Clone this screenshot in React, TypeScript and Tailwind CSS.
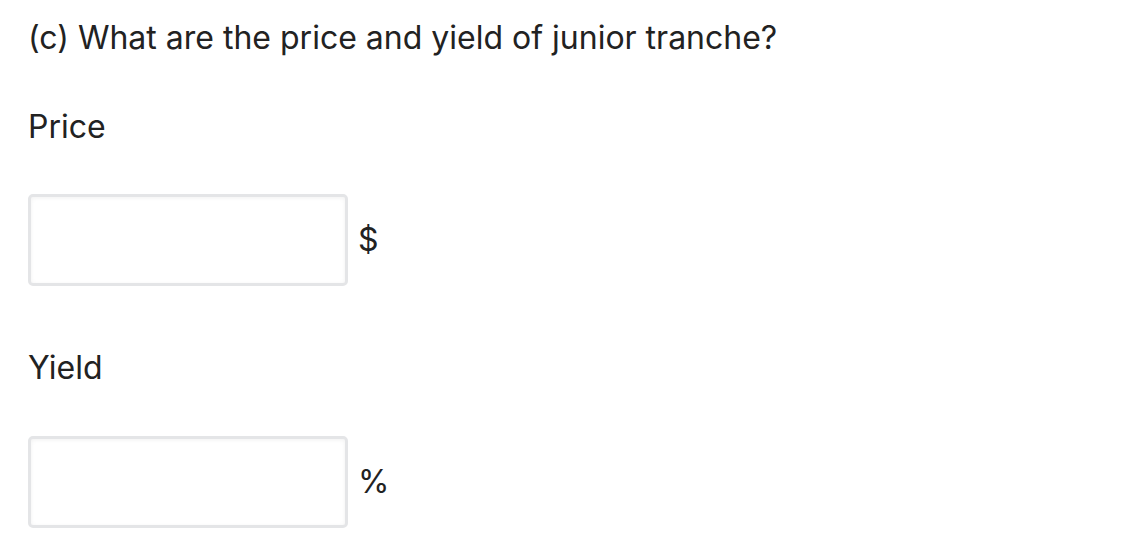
export default function App() {
  return (
    <div className="w-[1140px] h-[552px] bg-white text-[#222] pl-[28px] pt-[14px]" style={{ fontFamily: 'Inter, "Noto Sans", sans-serif' }}>
      <div className="text-[32px] leading-[48px]">(c) What are the price and yield of junior tranche?</div>
      <div className="mt-[41px] text-[32px] leading-[48px]">Price</div>
      <div className="mt-[43px] flex items-center gap-[10px]">
        <div className="w-[320px] h-[92px] rounded-[5px] border-[3px] border-[#e4e5e7] shadow-[inset_0_1px_4px_rgba(0,0,0,0.06)] bg-white" />
        <span className="text-[32px] leading-[48px]">$</span>
      </div>
      <div className="mt-[58px] text-[32px] leading-[48px]">Yield</div>
      <div className="mt-[44px] flex items-center gap-[10px]">
        <div className="w-[320px] h-[92px] rounded-[5px] border-[3px] border-[#e4e5e7] shadow-[inset_0_1px_4px_rgba(0,0,0,0.06)] bg-white" />
        <span className="text-[32px] leading-[48px]">%</span>
      </div>
    </div>
  );
}
